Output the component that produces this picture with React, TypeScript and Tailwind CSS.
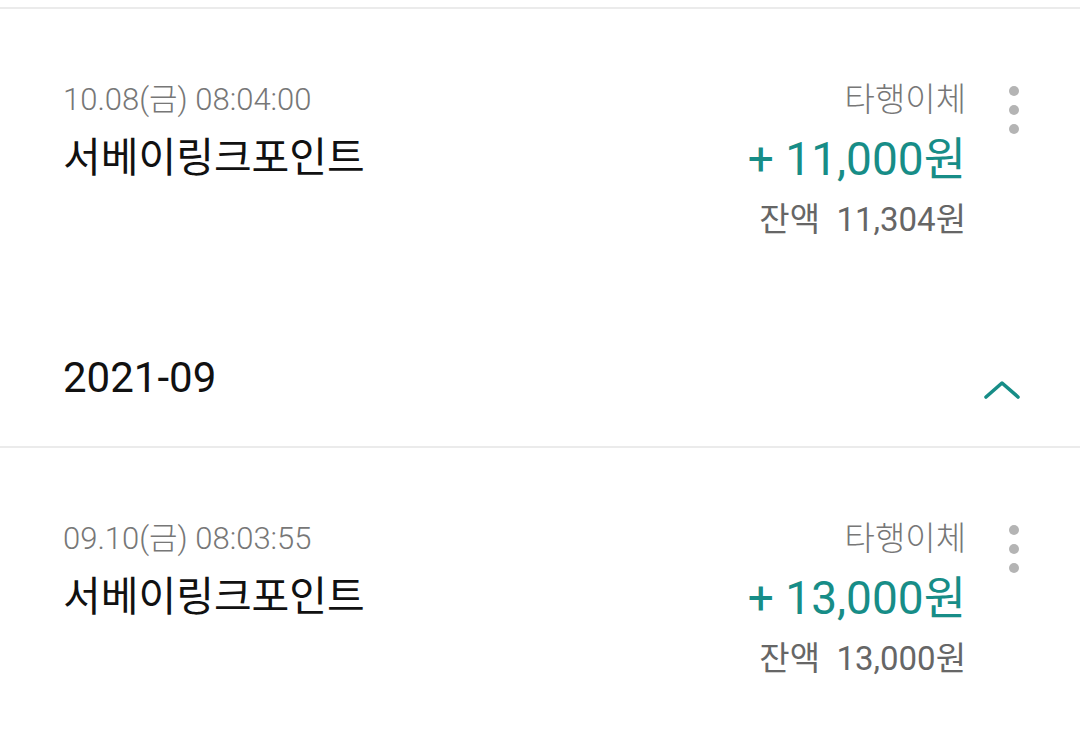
import React from "react";

const FONT = { fontFamily: 'Roboto, "Noto Sans CJK KR", sans-serif' };

function Kebab() {
  return (
    <div className="flex w-[48px] flex-col items-center gap-[9px] pt-[6px]">
      <span className="block h-[10px] w-[10px] rounded-full bg-[#b4b4b4]" />
      <span className="block h-[10px] w-[10px] rounded-full bg-[#b4b4b4]" />
      <span className="block h-[10px] w-[10px] rounded-full bg-[#b4b4b4]" />
    </div>
  );
}

function Item({ date, amount, balance }: { date: string; amount: string; balance: string }) {
  return (
    <div className="flex gap-[24px] pl-[63px] pr-[42px] pt-[71px] pb-[70px]">
      <div className="flex flex-1 flex-col">
        <div className="h-[40px] text-[31px] font-light leading-[40px] text-[#777777]">{date}</div>
        <div className="mt-[14px] h-[48px] text-[41px] leading-[48px] text-[#111111]">서베이링크포인트</div>
      </div>
      <div className="flex flex-col items-end">
        <div className="h-[40px] text-[33px] font-light leading-[40px] text-[#777777]">타행이체</div>
        <div className="mt-[14px] h-[50px] text-[46px] leading-[50px] text-[#178d87]">{amount}</div>
        <div className="mt-[16px] h-[40px] whitespace-pre text-[33px] leading-[40px] text-[#666666]">{balance}</div>
      </div>
      <Kebab />
    </div>
  );
}

export default function App() {
  return (
    <div className="min-h-[736px] w-[1080px] bg-white" style={FONT}>
      <div className="h-[7px]" />
      <div className="border-t-2 border-[#ebebeb]" />
      <Item date="10.08(금) 08:04:00" amount="+ 11,000원" balance={"잔액  11,304원"} />
      <div className="flex h-[138px] items-start justify-between border-b-2 border-[#ebebeb] pl-[63px] pr-[60px] pt-[48px]">
        <div className="h-[40px] text-[42px] leading-[40px] text-[#111111]">2021-09</div>
        <svg width="36" height="20" viewBox="0 0 36 20" className="mt-[22px]">
          <polyline points="2,17 18,3 34,17" fill="none" stroke="#178d87" strokeWidth="3.6" strokeLinecap="round" strokeLinejoin="round" />
        </svg>
      </div>
      <Item date="09.10(금) 08:03:55" amount="+ 13,000원" balance={"잔액  13,000원"} />
    </div>
  );
}
